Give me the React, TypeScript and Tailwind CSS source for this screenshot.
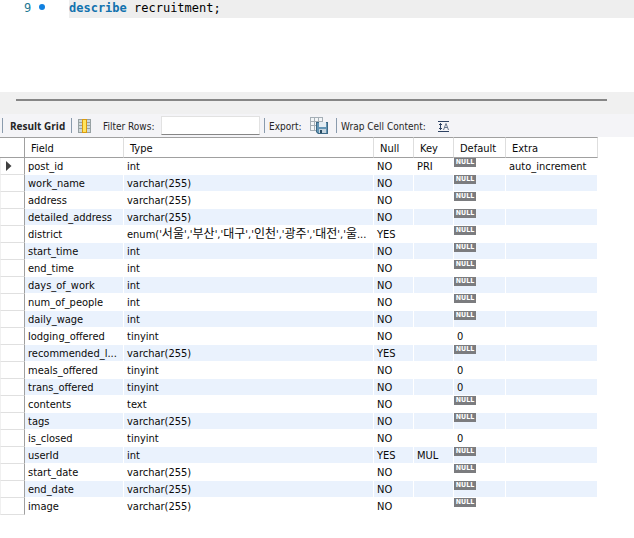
type Row = {
  field: string;
  type: string;
  nullable: string;
  key?: string;
  def?: string;
  extra?: string;
};

const rows: Row[] = [
  { field: "post_id", type: "int", nullable: "NO", key: "PRI", extra: "auto_increment" },
  { field: "work_name", type: "varchar(255)", nullable: "NO" },
  { field: "address", type: "varchar(255)", nullable: "NO" },
  { field: "detailed_address", type: "varchar(255)", nullable: "NO" },
  { field: "district", type: "enum('서울','부산','대구','인천','광주','대전','울...", nullable: "YES" },
  { field: "start_time", type: "int", nullable: "NO" },
  { field: "end_time", type: "int", nullable: "NO" },
  { field: "days_of_work", type: "int", nullable: "NO" },
  { field: "num_of_people", type: "int", nullable: "NO" },
  { field: "daily_wage", type: "int", nullable: "NO" },
  { field: "lodging_offered", type: "tinyint", nullable: "NO", def: "0" },
  { field: "recommended_l...", type: "varchar(255)", nullable: "YES" },
  { field: "meals_offered", type: "tinyint", nullable: "NO", def: "0" },
  { field: "trans_offered", type: "tinyint", nullable: "NO", def: "0" },
  { field: "contents", type: "text", nullable: "NO" },
  { field: "tags", type: "varchar(255)", nullable: "NO" },
  { field: "is_closed", type: "tinyint", nullable: "NO", def: "0" },
  { field: "userId", type: "int", nullable: "YES", key: "MUL" },
  { field: "start_date", type: "varchar(255)", nullable: "NO" },
  { field: "end_date", type: "varchar(255)", nullable: "NO" },
  { field: "image", type: "varchar(255)", nullable: "NO" },
];

const headers = ["Field", "Type", "Null", "Key", "Default", "Extra"];

// Hangul is set one pixel larger than the Latin text around it.
function MixedText({ text }: { text: string }) {
  return text.split(/([가-힣]+)/).map((part, i) =>
    i % 2 === 1 ? (
      <span key={i} className="text-[12px] leading-none">
        {part}
      </span>
    ) : (
      part
    ),
  );
}

function Cell({ text = "" }: { text?: string }) {
  return (
    <td className="border-r border-b border-white p-0 pt-px pl-[3px] whitespace-nowrap">
      <MixedText text={text} />
    </td>
  );
}

function DefaultCell({ text }: { text?: string }) {
  return (
    <td className="border-r border-b border-white p-0 align-top">
      {text ? (
        <span className="block pt-px pl-[3px]">{text}</span>
      ) : (
        <span className="block h-[9px] w-[22px] bg-[#7b7c7f] text-center text-[7px] leading-[9px] font-bold text-white">
          NULL
        </span>
      )}
    </td>
  );
}

function Divider() {
  return <span className="h-[15px] w-px shrink-0 bg-[#8a9bad]" />;
}

function ColumnsIcon() {
  return (
    <svg width="13" height="14" viewBox="0 0 13 14" shapeRendering="crispEdges" aria-hidden="true">
      <path d="M0 0h13v14H0z" fill="#98a2a4" />
      <path
        d="M1 1h3v2H1zM1 4h3v2H1zM1 7h3v2H1zM1 10h3v3H1zM9 1h3v2H9zM9 4h3v2H9zM9 7h3v2H9zM9 10h3v3H9z"
        fill="#cfd8d9"
      />
      <path d="M4 0h5v14H4z" fill="#d99a10" />
      <path d="M5 1h3v12H5z" fill="#ffe45c" />
    </svg>
  );
}

function ExportIcon() {
  return (
    <svg width="19" height="20" viewBox="0 0 19 20" aria-hidden="true">
      <path d="M0 1h13v14H0z" fill="#f3f6f8" />
      <path
        d="M0 1h13v1H0zM0 5h13v1H0zM0 9h13v1H0zM0 14h8v1H0zM0 1h1v14H0zM4 1h1v14H4zM8 1h1v8H8zM12 1h1v8h-1z"
        fill="#a5afb6"
      />
      <path d="M6 6h12v12H8l-2-2z" fill="#3d6985" />
      <path d="M7 7h10v10H8.500L7 15.500z" fill="#6395b5" />
      <path d="M9 6h7v5H9z" fill="#e4edf3" />
      <path d="M9 13h7v4H9z" fill="#c5d5df" />
      <path d="M10 14h2v3h-2z" fill="#284b62" />
    </svg>
  );
}

function WrapIcon() {
  return (
    <svg width="12" height="12" viewBox="0 0 12 12" fill="none" stroke="#2d4263" aria-hidden="true">
      <path d="M0 .5h11M0 10.5h11M2.500 2v7" />
      <path d="M1 3.500h3M1 7.500h3" />
      <path d="M5.500 9L8 2.500 10.500 9M6.500 6.500h3" stroke="#66758d" />
    </svg>
  );
}

export default function App() {
  return (
    <main className="min-h-screen bg-white text-[#0a0a0a]">
      <section className="flex h-[92px] items-start font-['DejaVu_Sans_Mono',monospace] text-[12px] leading-[17px]">
        <div className="flex w-[69px] shrink-0 items-center pl-[24px] text-[#237893]">
          <span>9</span>
          <span className="-mt-[3px] ml-[8px] size-[6px] rounded-full bg-[#1080e0]" />
        </div>
        <pre className="h-[18px] flex-1 bg-[#eeeeee] font-[inherit] text-black">
          <b className="text-[#1272ae]">describe</b> recruitment;
        </pre>
      </section>

      <div className="h-[22px] bg-[#f0f0f0] pt-[7px] pr-[27px] pl-[16px]">
        <div className="h-[2px] bg-[#868686]" />
      </div>

      <div className="flex h-[23px] items-center bg-[#f4f4f7] pl-[2px] font-['DejaVu_Sans_Condensed','DejaVu_Sans',sans-serif] text-[10px] whitespace-nowrap text-[#262626]">
        <Divider />
        <span className="w-[68px] pt-[2px] pl-[7px] font-['Open_Sans',sans-serif] font-bold">
          Result Grid
        </span>
        <Divider />
        <button type="button" aria-label="Form columns" className="ml-[6px]">
          <ColumnsIcon />
        </button>
        <label htmlFor="filter" className="ml-[12px] w-[58px] pt-[2px]">
          Filter Rows:
        </label>
        <input
          id="filter"
          type="text"
          className="h-[19px] w-[99px] border border-[#e2e2e2] border-b-[#868686] bg-white px-1 outline-none"
        />
        <span className="w-[4px]" />
        <Divider />
        <span className="ml-[4px] w-[41px] pt-[2px]">Export:</span>
        <button type="button" aria-label="Export recordset">
          <ExportIcon />
        </button>
        <span className="w-[7px]" />
        <Divider />
        <span className="ml-[4px] w-[97px] pt-[2px]">Wrap Cell Content:</span>
        <button type="button" aria-label="Wrap cell content" className="pt-[2px]">
          <WrapIcon />
        </button>
      </div>

      <table className="w-[598px] table-fixed border-separate border-spacing-0 font-['DejaVu_Sans_Condensed','DejaVu_Sans','Noto_Sans_CJK_KR',sans-serif] text-[11px] leading-[15px]">
        <colgroup>
          <col className="w-[25px]" />
          <col className="w-[99px]" />
          <col className="w-[250px]" />
          <col className="w-[40px]" />
          <col className="w-[40px]" />
          <col className="w-[52px]" />
          <col className="w-[92px]" />
        </colgroup>
        <thead>
          <tr className="h-[21px]">
            <td className="border-t border-r border-b border-[#a0a0a0] p-0" />
            {headers.map((h) => (
              <th
                key={h}
                scope="col"
                className="border-t border-r border-b border-t-[#a0a0a0] border-r-[#dedede] border-b-[#a0a0a0] p-0 pt-px pl-[6px] text-left font-normal"
              >
                {h}
              </th>
            ))}
          </tr>
        </thead>
        <tbody>
          {rows.map((r, i) => (
            <tr key={r.field} className="h-[17px] even:bg-[#eaf2fd]">
              <th
                scope="row"
                aria-label={r.field}
                className="border-r border-b border-l border-r-[#a0a0a0] border-b-[#e0e0e0] border-l-[#f0f0f0] bg-white p-0 pl-[5px]"
              >
                {i === 0 && (
                  <svg width="6" height="10" viewBox="0 0 6 10" className="block" aria-hidden="true">
                    <path d="M0 0l5.500 5L0 10z" fill="#404040" />
                  </svg>
                )}
              </th>
              <Cell text={r.field} />
              <Cell text={r.type} />
              <Cell text={r.nullable} />
              <Cell text={r.key} />
              <DefaultCell text={r.def} />
              <Cell text={r.extra} />
            </tr>
          ))}
        </tbody>
      </table>
    </main>
  );
}
